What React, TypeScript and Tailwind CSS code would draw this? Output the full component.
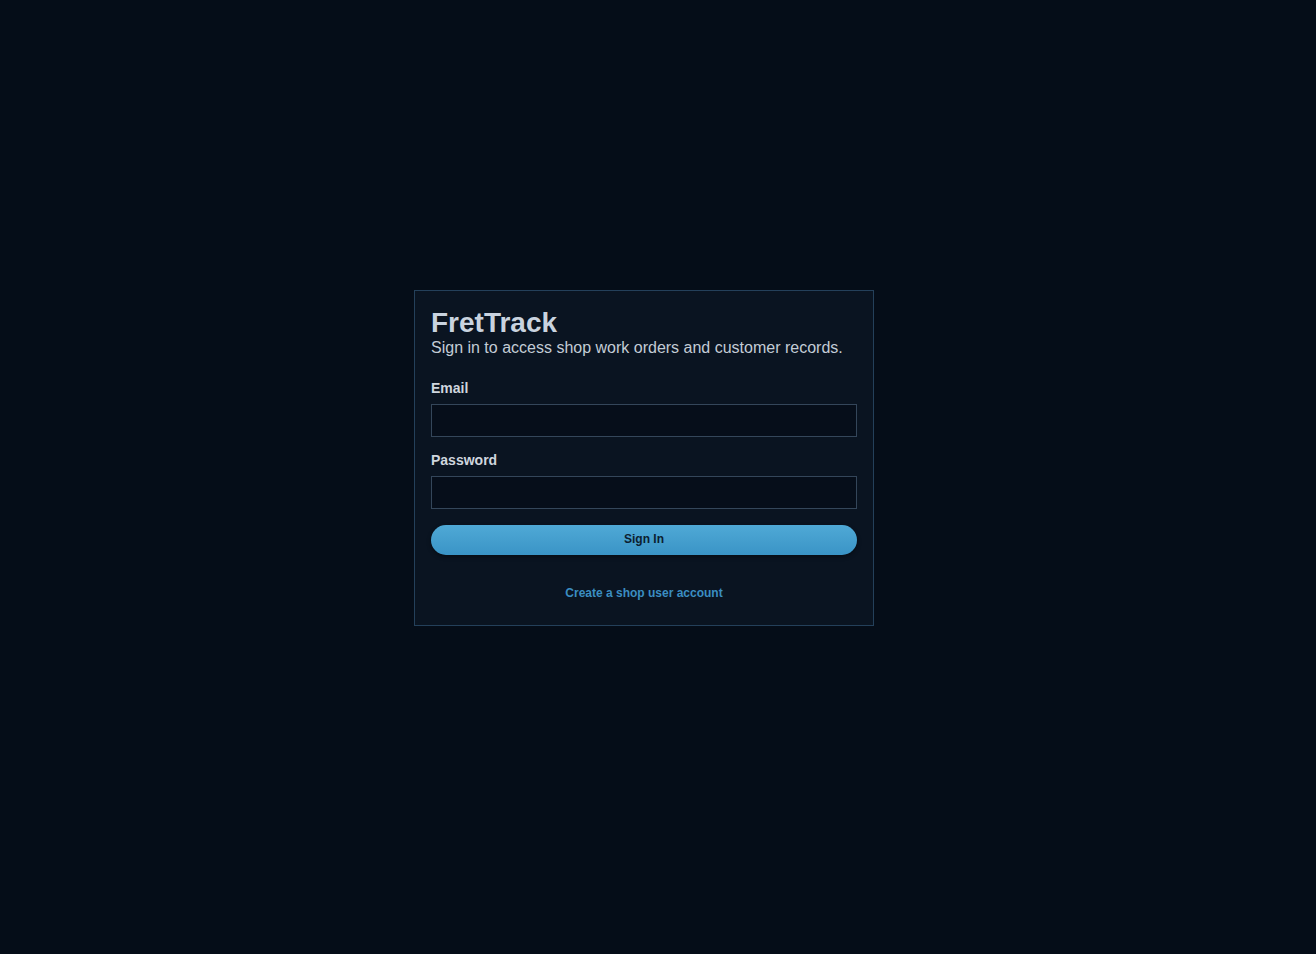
import React from "react";

export default function App() {
  return (
    <div
      className="min-h-screen w-full bg-[#050d18] flex justify-center pr-[28px]"
      style={{ fontFamily: '"Liberation Sans", Arial, sans-serif' }}
    >
      <div className="mt-[290px] mb-auto w-[460px] h-[336px] border border-[#24405a] bg-[#0a1421] px-4 pt-4 flex flex-col">
        <h1 className="text-[28px] leading-[31px] font-bold text-[#c9d3df] m-0">FretTrack</h1>
        <p className="text-[16px] leading-[20px] text-[#c3ccd6]">
          Sign in to access shop work orders and customer records.
        </p>
        <label className="mt-[22px] text-[14px] leading-[16px] font-bold text-[#cfd6de]">Email</label>
        <input
          type="email"
          className="mt-[8px] h-[33px] w-full border border-[#34465a] bg-[#060e1a] px-2 text-[14px] text-[#d0d6de] outline-none"
        />
        <label className="mt-[15px] text-[14px] leading-[16px] font-bold text-[#cfd6de]">Password</label>
        <input
          type="password"
          className="mt-[8px] h-[33px] w-full border border-[#34465a] bg-[#060e1a] px-2 text-[14px] text-[#d0d6de] outline-none"
        />
        <button className="mt-[16px] h-[30px] w-full rounded-full bg-gradient-to-b from-[#4fa9d6] to-[#3a94c6] text-[12px] leading-[14px] font-bold text-[#0c1e30] pb-[2px] shadow-[0_2px_4px_rgba(0,0,0,0.4)]">
          Sign In
        </button>
        <div className="mt-[30px] text-center leading-[14px]">
          <a className="text-[12px] leading-[14px] font-bold text-[#3b8ec1] cursor-pointer">
            Create a shop user account
          </a>
        </div>
      </div>
    </div>
  );
}
